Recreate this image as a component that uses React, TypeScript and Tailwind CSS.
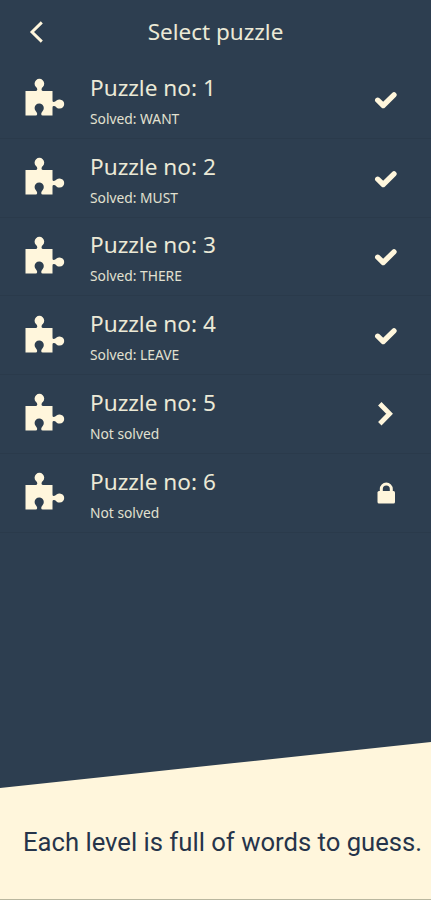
const puzzles = [
  { id: 1, status: 'Solved: WANT', state: 'solved' },
  { id: 2, status: 'Solved: MUST', state: 'solved' },
  { id: 3, status: 'Solved: THERE', state: 'solved' },
  { id: 4, status: 'Solved: LEAVE', state: 'solved' },
  { id: 5, status: 'Not solved', state: 'open' },
  { id: 6, status: 'Not solved', state: 'locked' },
];

function PuzzleIcon() {
  return (
    <svg className="mb-[3px] ml-[25px] h-[38px] w-10 shrink-0" viewBox="0 0 40 38" fill="currentColor">
      <path d="M0.5 13H11Q12.3 13 12.3 11.6Q12.3 10 10.8 8.8A4.8 4.8 0 1 1 18 8.8Q16.5 10 16.5 11.6Q16.5 13 17.8 13H27.5V22.5Q27.5 24 28.8 24Q30.2 24 31.5 22.6A4.6 4.6 0 1 1 31.5 29.4Q30.2 28 28.8 28Q27.5 28 27.5 29.4V37.5H17.8Q16.2 37.5 16.2 36Q16.2 34.7 17.5 33.3A4.6 4.6 0 1 0 10.9 33.3Q12.2 34.7 12.2 36Q12.2 37.5 10.6 37.5H0.5Z" />
    </svg>
  );
}

function StateIcon({ state }: { state: string }) {
  if (state === 'solved') {
    return (
      <svg className="mt-[2px] h-5 w-6" viewBox="0 0 24 20" fill="none" stroke="currentColor" strokeWidth="5.3" strokeLinejoin="round" strokeLinecap="round">
        <path d="M3.7 10.2 9.2 15.5 20 4.8" />
      </svg>
    );
  }
  if (state === 'open') {
    return (
      <svg className="h-[26px] w-6" viewBox="0 0 24 26" fill="none" stroke="currentColor" strokeWidth="4.8">
        <path d="M5.8 2.8 15.6 12.8 5.8 22.8" />
      </svg>
    );
  }
  return (
    <svg className="h-[22px] w-6" viewBox="0 0 24 22">
      <rect x="3.5" y="9" width="17.5" height="12.4" rx="1.5" fill="currentColor" />
      <path d="M7.3 10V7a5 5 0 0 1 10 0v3" fill="none" stroke="currentColor" strokeWidth="3" />
    </svg>
  );
}

export default function App() {
  return (
    <main className="flex h-[900px] w-[431px] flex-col overflow-hidden bg-[#2d3e50] font-['Noto_Sans',sans-serif] text-[#fff6dc]">
      <header className="grid h-[60px] shrink-0 grid-cols-[74px_1fr_74px] items-center pt-1">
        <svg className="ml-7 h-6 w-4" viewBox="0 0 16 24" fill="none" stroke="currentColor" strokeWidth="2.9">
          <path d="M13.8 2.4 4 12l9.8 9.6" />
        </svg>
        <h1 className="text-center text-[22.5px] text-[#ebe9d6]">Select puzzle</h1>
      </header>
      <ul className="shrink-0">
        {puzzles.map((p) => (
          <li key={p.id} className="flex h-[78.75px] items-center border-b border-[#2a3a4b]">
            <PuzzleIcon />
            <div className="ml-[25px] flex-1 pt-[7px]">
              <h2 className="text-[22.6px] leading-8 text-[#ebe9d6]">Puzzle no: {p.id}</h2>
              <p className="mt-px text-[13.8px] leading-7 text-[#e2e1d1]">{p.status}</p>
            </div>
            <div className="mr-[33px] flex w-6 justify-center">
              <StateIcon state={p.state} />
            </div>
          </li>
        ))}
      </ul>
      <footer className="mt-auto h-[158px] shrink-0 border-b border-[#b9b79f] bg-[#fff6dc] pt-[81px] pl-[23px] font-[Roboto,sans-serif] text-[25.65px] whitespace-nowrap text-[#26344a] [clip-path:polygon(0_46px,100%_0,100%_100%,0_100%)]">
        Each level is full of words to guess.
      </footer>
    </main>
  );
}
